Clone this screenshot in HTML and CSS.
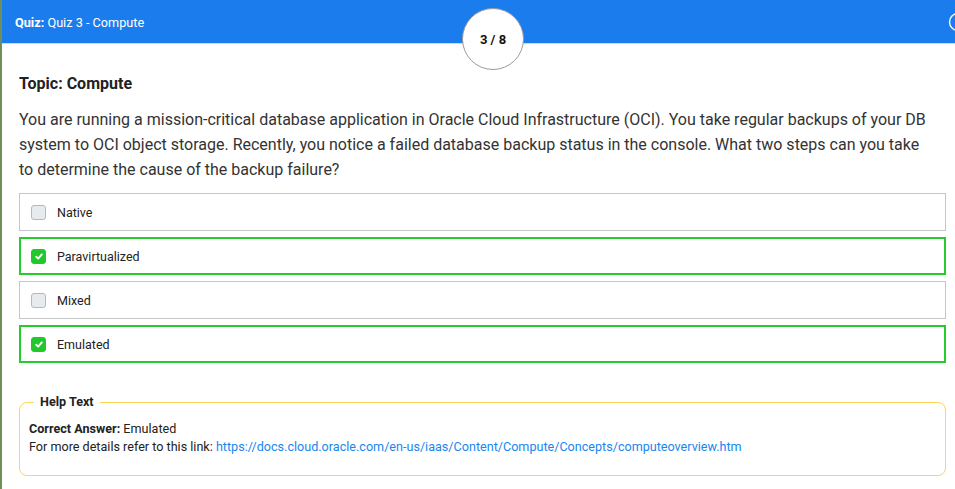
FILE: index.html
```html
<!DOCTYPE html>
<html>
<head>
<meta charset="utf-8">
<link rel="stylesheet" href="styles.css">
</head>
<body>
<div class="page">
  <header class="topbar">
    <div class="title"><b>Quiz:</b> Quiz 3 - Compute</div>
    <div class="counter">3 / 8</div>
    <svg class="corner-icon" width="20" height="20" viewBox="0 0 20 20"><circle cx="10" cy="10" r="8.5" fill="none" stroke="#fff" stroke-width="1.4"/></svg>
  </header>
  <main class="content">
    <h2 class="topic">Topic: Compute</h2>
    <p class="question">You are running a mission-critical database application in Oracle Cloud Infrastructure (OCI). You take regular backups of your DB system to OCI object storage. Recently, you notice a failed database backup status in the console. What two steps can you take to determine the cause of the backup failure?</p>
    <div class="options">
      <div class="option"><span class="box"></span><span class="label">Native</span></div>
      <div class="option correct"><span class="box checked"><svg width="8" height="7" viewBox="0 0 8 7"><path d="M1.2 3.8 L3.2 5.6 L6.8 1.4" fill="none" stroke="#fff" stroke-width="1.9" stroke-linecap="round" stroke-linejoin="round"/></svg></span><span class="label">Paravirtualized</span></div>
      <div class="option"><span class="box"></span><span class="label">Mixed</span></div>
      <div class="option correct"><span class="box checked"><svg width="8" height="7" viewBox="0 0 8 7"><path d="M1.2 3.8 L3.2 5.6 L6.8 1.4" fill="none" stroke="#fff" stroke-width="1.9" stroke-linecap="round" stroke-linejoin="round"/></svg></span><span class="label">Emulated</span></div>
    </div>
    <fieldset class="help">
      <legend>Help Text</legend>
      <div><b>Correct Answer:</b> Emulated</div>
      <div>For more details refer to this link: <a href="#">https://docs.cloud.oracle.com/en-us/iaas/Content/Compute/Concepts/computeoverview.htm</a></div>
    </fieldset>
  </main>
</div>
</body>
</html>
```
FILE: styles.css
```css
* { box-sizing: border-box; }
html, body { margin: 0; padding: 0; }
body {
  font-family: Roboto, "Liberation Sans", Arial, sans-serif;
  background: #fff;
  color: #222;
  width: 955px;
  height: 489px;
  overflow: hidden;
}
.page {
  border-left: 2px solid #6e8f57;
  min-height: 489px;
}
.topbar {
  position: relative;
  height: 44px;
  background: #1b7ded;
  border-bottom: 1px solid #d8d8d8;
  color: #fff;
  font-size: 12.7px;
  padding: 15px 0 0 13px;
}
.title b { font-weight: 700; }
.counter {
  position: absolute;
  left: 460px;
  top: 8px;
  width: 62px;
  height: 62px;
  border-radius: 50%;
  background: #fff;
  border: 1px solid #9a9a9a;
  color: #111;
  font-weight: 700;
  font-size: 13px;
  display: flex;
  align-items: center;
  justify-content: center;
  z-index: 2;
}
.corner-icon {
  position: absolute;
  right: -13px;
  top: 12px;
}
.content {
  padding: 0 9px 0 17px;
}
.topic {
  margin: 30px 0 0;
  font-size: 16px;
  font-weight: 700;
  color: #222;
  line-height: 20px;
}
.question {
  margin: 13px 0 0;
  padding-right: 14px;
  font-size: 16px;
  line-height: 25px;
  color: #333;
}
.options {
  margin-top: 11px;
  display: flex;
  flex-direction: column;
  gap: 6px;
}
.option {
  height: 38px;
  border: 1px solid #c6c6c6;
  display: flex;
  align-items: center;
  padding-left: 11px;
  font-size: 12.5px;
  color: #222;
}
.option.correct {
  border: 2px solid #25cc2e;
  padding-left: 10px;
}
.box {
  width: 15px;
  height: 15px;
  border-radius: 3px;
  background: #e8ebee;
  border: 1px solid #b3b9bf;
  margin-right: 11px;
  display: flex;
  align-items: center;
  justify-content: center;
}
.box.checked {
  background: #22c72b;
  border-color: #22c72b;
}
.help {
  margin: 30px 0 0;
  border: 1px solid #fcd55a;
  border-radius: 8px;
  padding: 9px 9px 19px;
  font-size: 12.6px;
  line-height: 18px;
  color: #222;
}
.help legend {
  font-weight: 700;
  font-size: 12.6px;
  padding: 0 6px;
  margin-left: 5px;
}
.help a {
  color: #1a86ee;
  text-decoration: none;
}
```
